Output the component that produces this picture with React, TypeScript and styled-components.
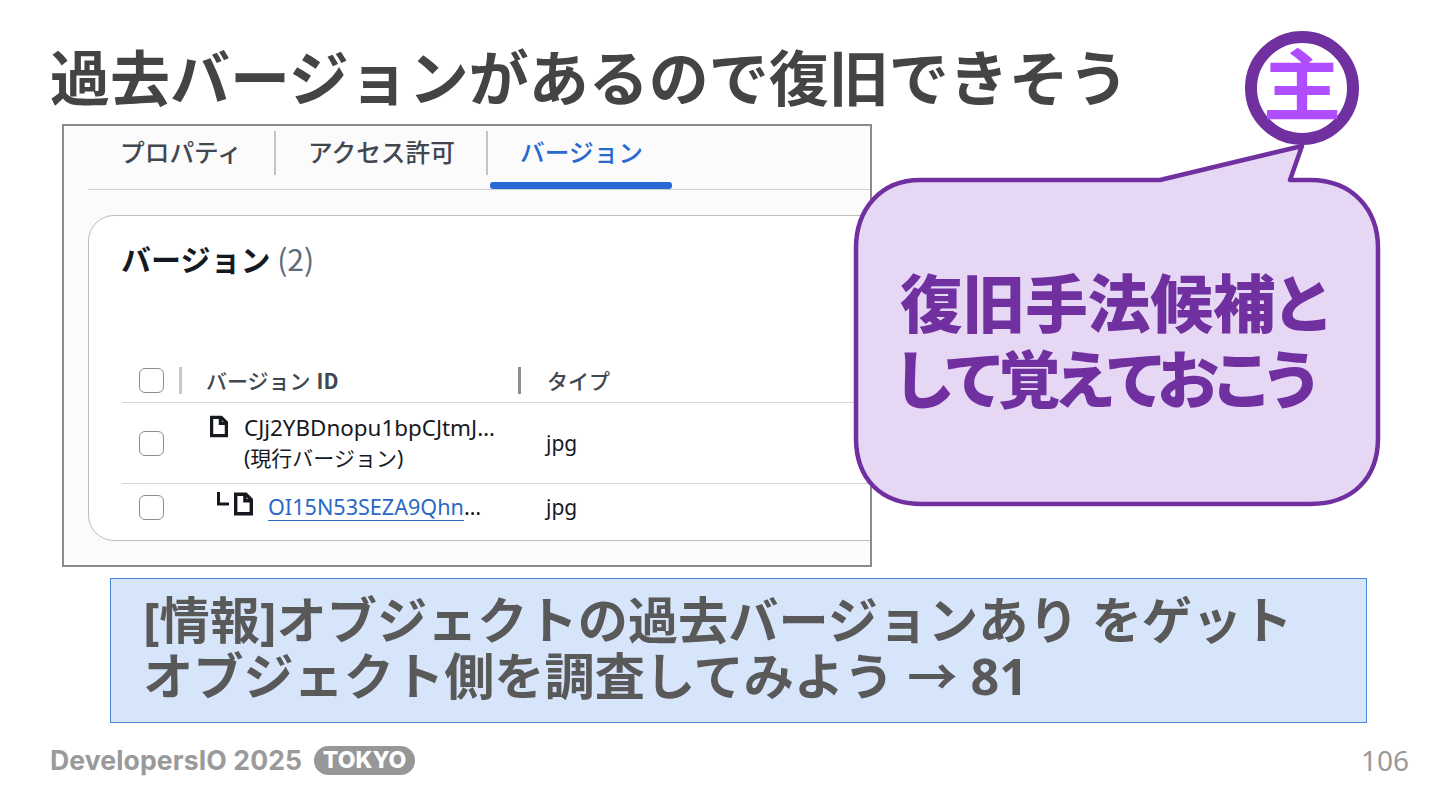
import React from 'react';
import styled, { createGlobalStyle } from 'styled-components';

const GlobalStyle = createGlobalStyle`
  html, body {
    margin: 0;
    padding: 0;
    background: #fff;
  }
  body {
    font-family: "Noto Sans", "Noto Sans CJK JP", sans-serif;
  }
`;

const Slide = styled.div`
  position: relative;
  width: 1440px;
  height: 810px;
  overflow: hidden;
  display: flex;
  flex-direction: column;
  background: #fff;
`;

const Title = styled.h1`
  height: 124px;
  margin: 0;
  padding: 21px 0 0 50px;
  box-sizing: border-box;
  font: 700 60px/108px "Noto Sans CJK JP", sans-serif;
  color: #444;
  white-space: nowrap;
`;

const Shot = styled.section`
  width: 810px;
  height: 443px;
  margin-left: 62px;
  box-sizing: border-box;
  border: 2px solid #8c8c8c;
  background: #fbfbfb;
  overflow: hidden;
  flex-shrink: 0;
  padding-left: 24px;
`;

const Tabs = styled.nav`
  height: 64px;
  box-sizing: border-box;
  display: flex;
  align-items: flex-start;
  border-bottom: 1px solid #cfcfcf;
  padding-top: 5px;
`;

const Tab = styled.div<{ $width: number; $active?: boolean; $divider?: boolean }>`
  position: relative;
  width: ${({ $width }) => $width}px;
  height: 44px;
  box-sizing: border-box;
  padding-left: 32px;
  font: 500 24.7px/40px "Noto Sans CJK JP", sans-serif;
  color: ${({ $active }) => ($active ? '#2a68d0' : '#424650')};
  border-right: ${({ $divider }) => ($divider ? '2px solid #c4c4c4' : 'none')};
  white-space: nowrap;
`;

const TabLine = styled.span`
  position: absolute;
  left: 2px;
  top: 51px;
  width: 182px;
  height: 7px;
  border-radius: 3px;
  background: #2a68d8;
`;

const Card = styled.div`
  width: 840px;
  height: 326px;
  margin-top: 25px;
  box-sizing: border-box;
  border: 1.5px solid #bdbdbd;
  border-radius: 26px;
  background: #fff;
  padding-left: 33px;
`;

const CardTitle = styled.h2`
  height: 142px;
  margin: 0 0 0 -1px;
  padding-top: 20px;
  box-sizing: border-box;
  font: 700 30px/44px "Noto Sans CJK JP", sans-serif;
  color: #16191f;
`;

const Count = styled.span`
  font-weight: 400;
  font-size: 30px;
  color: #5f6b7a;
`;

const Row = styled.div<{ $height: number; $line?: boolean }>`
  height: ${({ $height }) => $height}px;
  display: grid;
  grid-template-columns: 57px 339px 1fr;
  align-items: center;
  border-bottom: ${({ $line }) => ($line ? '1px solid #d5d5d5' : 'none')};
`;

const Check = styled.span`
  width: 25px;
  height: 25px;
  margin-left: 17px;
  box-sizing: border-box;
  border: 1.5px solid #8c8c94;
  border-radius: 6px;
  background: #fff;
`;

const HeadCell = styled.div<{ $divider?: boolean }>`
  height: 27px;
  display: flex;
  align-items: center;
  padding-left: ${({ $divider }) => ($divider ? 26 : 24)}px;
  box-sizing: border-box;
  border-left: ${({ $divider }) => ($divider ? '3px solid #8d8d95' : '3px solid #c8c8c8')};
  font: 500 21px/27px "Noto Sans CJK JP", sans-serif;
  color: #414750;
  white-space: nowrap;
`;

const HeadId = styled.span`
  margin-left: 6px;
  font: 700 21px/27px "Noto Sans CJK JP", sans-serif;
`;

const VersionCell = styled.div<{ $indent: number }>`
  display: flex;
  align-items: flex-start;
  padding-left: ${({ $indent }) => $indent}px;
  color: #16191f;
  font: 400 21px/30px "Noto Sans", "Noto Sans CJK JP", sans-serif;
`;

const IconBox = styled.span<{ $top?: number; $gap: number }>`
  display: inline-flex;
  flex-shrink: 0;
  margin-top: ${({ $top }) => $top ?? 0}px;
  margin-right: ${({ $gap }) => $gap}px;
`;

const VersionText = styled.div`
  white-space: nowrap;
`;

const VersionId = styled.span`
  font-size: 22.4px;
`;

const VersionLink = styled.a`
  display: inline-block;
  color: #2a68c8;
  border-bottom: 1.5px solid #2a68c8;
  font-size: 21.6px;
  line-height: 27px;
  white-space: nowrap;
`;

const Dots = styled.span`
  color: #16191f;
  font-size: 21.6px;
`;

const TypeCell = styled.div`
  padding-left: 28px;
  font: 400 21px/30px "Noto Sans", sans-serif;
  color: #16191f;
`;

const InfoBox = styled.aside`
  width: 1257px;
  height: 145px;
  margin: 11px 0 0 110px;
  box-sizing: border-box;
  border: 1.5px solid #4a8ad8;
  background: #d7e5fb;
  padding: 13px 0 0 32px;
  font: 700 50.2px/56px "Noto Sans", "Noto Sans CJK JP", sans-serif;
  color: #595959;
  white-space: nowrap;
  flex-shrink: 0;
`;

const Footer = styled.footer`
  flex: 1;
  display: flex;
  align-items: center;
  padding: 0 31px 13px 50px;
`;

const Brand = styled.span`
  font: 700 26.6px/30px "Inter", sans-serif;
  color: #9a9a9a;
  letter-spacing: 0.1px;
`;

const Pill = styled.span`
  margin-left: 12px;
  width: 101px;
  height: 29px;
  border-radius: 15px;
  background: #979797;
  color: #fff;
  font: 800 23px/29px "Inter", sans-serif;
  text-align: center;
`;

const PageNo = styled.span`
  margin-left: auto;
  font: 400 28px/34px "Noto Sans", sans-serif;
  color: #999;
`;

const Bubble = styled.div`
  position: absolute;
  left: 850px;
  top: 140px;
  width: 535px;
  height: 372px;
`;

const BubbleShape = styled.svg`
  position: absolute;
  inset: 0;
`;

const BubbleText = styled.div`
  position: absolute;
  left: 50px;
  top: 122px;
  color: #7030a0;
  font: 900 62.6px/76px "Noto Sans CJK JP", sans-serif;
  font-feature-settings: "palt";
  white-space: nowrap;
`;

const BubbleLine = styled.div<{ $spacing: number; $shift?: number }>`
  letter-spacing: ${({ $spacing }) => $spacing}px;
  margin-left: ${({ $shift }) => $shift ?? 0}px;
`;

const Avatar = styled.div`
  position: absolute;
  left: 1245px;
  top: 31px;
  width: 114px;
  height: 114px;
  box-sizing: border-box;
  border: 12px solid #7030a0;
  border-radius: 50%;
  background: #fff;
  display: flex;
  align-items: center;
  justify-content: center;
  padding-bottom: 14px;
  font: 700 78px/78px "Noto Sans CJK JP", sans-serif;
  color: #b04dff;
`;

const FileIcon = ({ width, height }: { width: number; height: number }) => (
  <svg width={width} height={height} viewBox="0 0 20 24" fill="none" stroke="#16191f" strokeWidth="3.6" strokeLinejoin="miter">
    <path d="M1.8 1.8H12.5L18.2 7.5V22.2H1.8Z" />
    <path d="M11.5 1.8V8.5H18.2" />
  </svg>
);

const Elbow = () => (
  <svg width="12" height="14" viewBox="0 0 12 14" fill="none" stroke="#16191f" strokeWidth="3" style={{ marginRight: 5 }}>
    <path d="M1.5 0V12H12" />
  </svg>
);

export default function App() {
  return (
    <Slide>
      <GlobalStyle />
      <Title>過去バージョンがあるので復旧できそう</Title>

      <Shot>
        <Tabs>
          <Tab $width={188} $divider>プロパティ</Tab>
          <Tab $width={212} $divider>アクセス許可</Tab>
          <Tab $width={200} $active>
            バージョン
            <TabLine />
          </Tab>
        </Tabs>
        <Card>
          <CardTitle>
            バージョン <Count>(2)</Count>
          </CardTitle>
          <Row $height={44} $line>
            <Check />
            <HeadCell>バージョン<HeadId>ID</HeadId></HeadCell>
            <HeadCell $divider>タイプ</HeadCell>
          </Row>
          <Row $height={80} $line>
            <Check />
            <VersionCell $indent={31}>
              <IconBox $top={2} $gap={16}>
                <FileIcon width={18} height={23} />
              </IconBox>
              <VersionText>
                <VersionId>CJj2YBDnopu1bpCJtmJ…</VersionId>
                <br />
                (現行バージョン)
              </VersionText>
            </VersionCell>
            <TypeCell>jpg</TypeCell>
          </Row>
          <Row $height={46}>
            <Check />
            <VersionCell $indent={38}>
              <Elbow />
              <IconBox $gap={15}>
                <FileIcon width={19} height={24} />
              </IconBox>
              <VersionText>
                <VersionLink>OI15N53SEZA9Qhn</VersionLink>
                <Dots>…</Dots>
              </VersionText>
            </VersionCell>
            <TypeCell>jpg</TypeCell>
          </Row>
        </Card>
      </Shot>

      <InfoBox>
        [情報]オブジェクトの過去バージョンあり をゲット
        <br />
        オブジェクト側を調査してみよう → 81
      </InfoBox>

      <Footer>
        <Brand>DevelopersIO 2025</Brand>
        <Pill>TOKYO</Pill>
        <PageNo>106</PageNo>
      </Footer>

      <Bubble>
        <BubbleShape width="535" height="372" viewBox="0 0 535 372">
          <path
            d="M70 40H310L452 6L440 40H460C503 40 528 70 528 108V298C528 338 503 364 460 364H72C30 364 6 338 6 298V108C6 70 30 40 70 40Z"
            fill="#e6d8f5"
            stroke="#7030a0"
            strokeWidth="4.5"
            strokeLinejoin="round"
          />
        </BubbleShape>
        <BubbleText>
          <BubbleLine $spacing={0}>復旧手法候補と</BubbleLine>
          <BubbleLine $spacing={-2.9} $shift={-4}>して覚えておこう</BubbleLine>
        </BubbleText>
      </Bubble>

      <Avatar>主</Avatar>
    </Slide>
  );
}
